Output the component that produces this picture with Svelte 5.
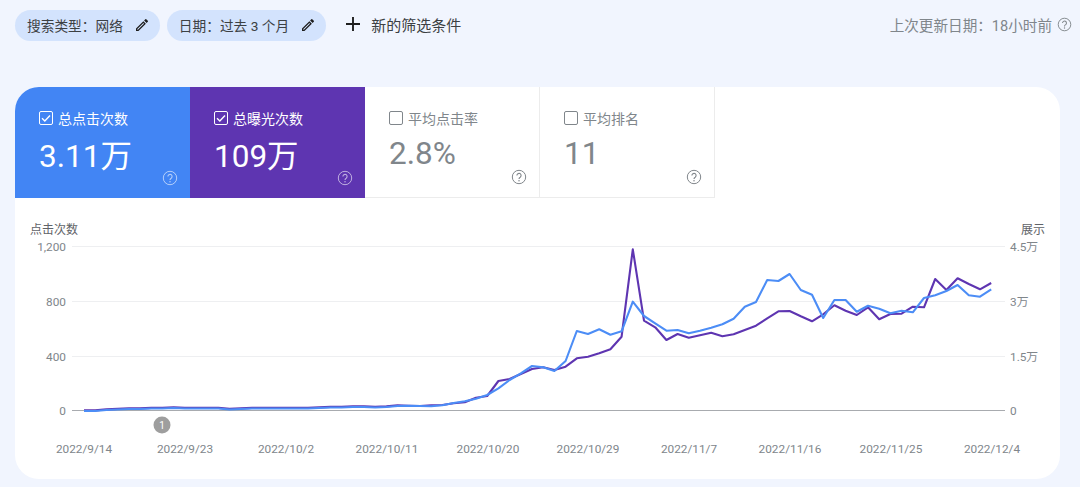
<script>
	// y positions of the two series, measured in page pixels for x = 84 + 11.2 * i
	const early = [411, 411, 410, 409.5, 409, 409, 408.5, 408.5, 408, 408.5, 408.5, 408.5, 408.5, 409.5, 409, 408.5, 408.5, 408.5, 408.5, 408.5, 408.5, 408, 407.5, 407.5, 407, 407, 407.5, 407, 406];
	const clicksLate = [405.7, 406, 406.3, 405.3, 403, 401.3, 398.7, 395, 388.3, 380, 373.3, 366, 367.3, 371, 361, 331, 334, 329.3, 334.7, 331.3, 301.7, 316, 323.3, 330.7, 330, 333.3, 330.7, 327.7, 324.3, 318.7, 306.7, 302, 280, 281, 274, 290, 294.7, 318, 300, 300, 311.7, 305.7, 308.7, 313.3, 310.7, 312.3, 298, 295.3, 291, 285, 295.3, 296.7, 289.3];
	const imprLate = [405.7, 406, 405.3, 405, 403.3, 402.3, 397.7, 396, 381, 379, 374, 369, 367.3, 370, 366.7, 358.3, 356.7, 353.3, 349.3, 336.7, 249.3, 320.7, 327.3, 340, 334, 337.7, 335.3, 332.7, 336.3, 334.3, 330, 325.7, 318.3, 311.3, 311, 316.3, 321.3, 314.3, 305.3, 310.7, 315, 307.3, 319.3, 314, 313.7, 306.7, 307.3, 279, 290, 278.3, 284, 289.3, 283];
	const clicks = [...early, ...clicksLate];
	const impressions = [...early.map((y) => y - 0.6), ...imprLate];

	const toPoints = (ys) => ys.map((y, i) => `${(84 + 11.2 * i).toFixed(1)},${y}`).join(" ");

	const metrics = [
		{ label: "总点击次数", value: "3.11万", kind: "blue", on: true },
		{ label: "总曝光次数", value: "109万", kind: "purple", on: true },
		{ label: "平均点击率", value: "2.8%", kind: "off", on: false },
		{ label: "平均排名", value: "11", kind: "off", on: false },
	];
	const gridLines = [
		{ y: 246.5, left: "1,200", right: "4.5万" },
		{ y: 301.5, left: "800", right: "3万" },
		{ y: 356.5, left: "400", right: "1.5万" },
	];
	const dates = [
		["2022/9/14", 84], ["2022/9/23", 185], ["2022/10/2", 286], ["2022/10/11", 387], ["2022/10/20", 488],
		["2022/10/29", 588], ["2022/11/7", 689], ["2022/11/16", 790], ["2022/11/25", 891], ["2022/12/4", 992],
	];
</script>

{#snippet pencil()}
	<svg class="pencil" viewBox="0 0 24 24" width="16" height="16" aria-hidden="true">
		<path fill="#1f1f1f" d="M3 17.25V21h3.75L17.81 9.94l-3.75-3.75L3 17.25zM5.9 19H5v-.9l9.06-9.06.9.9L5.9 19zM20.71 7.04a1 1 0 0 0 0-1.41l-2.34-2.34a1 1 0 0 0-1.41 0l-1.83 1.83 3.75 3.75 1.83-1.83z" />
	</svg>
{/snippet}

{#snippet help(color)}
	<svg class="help" viewBox="0 0 16 16" width="16" height="16" aria-hidden="true">
		<circle cx="8" cy="8" r="6.7" fill="none" stroke={color} stroke-width="1" />
		<path d="M5.9 6.5a2.1 2.1 0 1 1 3.3 1.7c-.8.5-1.2.9-1.2 1.8" fill="none" stroke={color} stroke-width="1.1" />
		<circle cx="8" cy="11.7" r=".75" fill={color} />
	</svg>
{/snippet}

<main>
	<header>
		<button class="chip">搜索类型&#xFF1A;网络 {@render pencil()}</button>
		<button class="chip">日期&#xFF1A;过去 3 个月 {@render pencil()}</button>
		<button class="add">
			<svg viewBox="0 0 14 14" width="14" height="14" aria-hidden="true">
				<path d="M7 0v14M0 7h14" stroke="#1f1f1f" stroke-width="1.9" />
			</svg>
			新的筛选条件
		</button>
		<div class="updated">上次更新日期&#xFF1A;18小时前 {@render help("#80868b")}</div>
	</header>

	<section class="card">
		<div class="tabs">
			{#each metrics as m}
				<div class="tab {m.kind}">
					<div class="label">
						<span class="box">
							{#if m.on}
								<svg viewBox="0 0 14 14" width="14" height="14" aria-hidden="true">
									<path d="M3 7.2l2.8 2.8L11 4.4" fill="none" stroke="#fff" stroke-width="1.4" />
								</svg>
							{/if}
						</span>
						{m.label}
					</div>
					<div class="value">{m.value}</div>
					<div class="tip">{@render help(m.on ? "rgba(255,255,255,.6)" : "#80868b")}</div>
				</div>
			{/each}
		</div>

		<svg class="chart" viewBox="15 198 1045 281" width="1045" height="281">
			<text x="30" y="234" class="axis">点击次数</text>
			<text x="1045" y="234" class="axis end">展示</text>

			{#each gridLines as g}
				<line x1="72" x2="1005" y1={g.y} y2={g.y} stroke="#eeeff1" />
				<text x="66" y={g.y + 4} class="tick end">{g.left}</text>
				<text x="1010" y={g.y + 4} class="tick">{g.right}</text>
			{/each}
			<line x1="72" x2="1005" y1="410.5" y2="410.5" stroke="#a8abaf" />
			<text x="66" y="415" class="tick end">0</text>
			<text x="1010" y="415" class="tick">0</text>

			<polyline points={toPoints(impressions)} fill="none" stroke="#5e35b1" stroke-width="2.1" stroke-linejoin="round" />
			<polyline points={toPoints(clicks)} fill="none" stroke="#4c8df6" stroke-width="2.1" stroke-linejoin="round" />

			<circle cx="162" cy="425" r="8.5" fill="#9e9e9e" />
			<text x="162" y="428.5" class="marker">1</text>

			{#each dates as [d, x]}
				<text {x} y="453" class="tick middle">{d}</text>
			{/each}
		</svg>
	</section>
</main>

<style>
	:global(body) {
		margin: 0;
		background: #f1f5fe;
	}

	main {
		width: 1080px;
		height: 487px;
		box-sizing: border-box;
		padding: 10px 8px 0 15px;
		overflow: hidden;
		font-family: Roboto, "Noto Sans CJK SC", sans-serif;
		color: #1f1f1f;
	}

	header {
		display: flex;
		align-items: center;
		height: 31px;
		gap: 7px;
		font-size: 13.7px;
	}

	button {
		border: 0;
		font: inherit;
		color: #3c4043;
		white-space: nowrap;
	}

	.chip {
		display: flex;
		align-items: center;
		gap: 11px;
		height: 31px;
		padding: 0 10px 2px 12px;
		border-radius: 16px;
		background: #d3e3fd;
	}

	.add {
		display: flex;
		align-items: center;
		gap: 11px;
		margin-left: 13px;
		padding: 0 0 3px;
		background: none;
		font-size: 15px;
	}

	.updated {
		display: flex;
		align-items: center;
		gap: 5px;
		margin-left: auto;
		padding-bottom: 3px;
		font-size: 14.6px;
		color: #80868b;
	}

	.updated .help {
		width: 15px;
		height: 15px;
	}

	.card {
		width: 1045px;
		height: 392px;
		margin-top: 46px;
		border-radius: 24px;
		background: #fff;
		overflow: hidden;
	}

	.tabs {
		display: flex;
		height: 111px;
	}

	.tab {
		position: relative;
		width: 175px;
		box-sizing: border-box;
		padding: 22px 0 0 24px;
	}

	.blue {
		background: #4285f4;
		color: #fff;
	}

	.purple {
		background: #5e35b1;
		color: #fff;
	}

	.off {
		color: #80868b;
		border-right: 1px solid #ececec;
		border-bottom: 1px solid #ececec;
	}

	.label {
		display: flex;
		align-items: center;
		gap: 5px;
		height: 18px;
		font-size: 14px;
	}

	.box {
		width: 14px;
		height: 14px;
		box-sizing: border-box;
		border: 1px solid #80868b;
		border-radius: 2px;
	}

	.box svg {
		display: block;
		margin: -1px;
	}

	.blue .box,
	.purple .box {
		border-color: #fff;
	}

	.value {
		margin-top: 9px;
		font-size: 31.5px;
		line-height: 42px;
	}

	.off .value {
		margin-top: 6px;
	}

	.tip {
		position: absolute;
		right: 12px;
		bottom: 12px;
		height: 16px;
	}

	.help {
		display: block;
	}

	.chart {
		display: block;
	}

	.chart text {
		font-family: Roboto, "Noto Sans CJK SC", sans-serif;
	}

	.axis {
		font-size: 12px;
		fill: #5f6368;
	}

	.tick {
		font-size: 11.8px;
		fill: #80868b;
	}

	.end {
		text-anchor: end;
	}

	.middle {
		text-anchor: middle;
	}

	.marker {
		font-size: 10px;
		fill: #fff;
		text-anchor: middle;
	}
</style>
